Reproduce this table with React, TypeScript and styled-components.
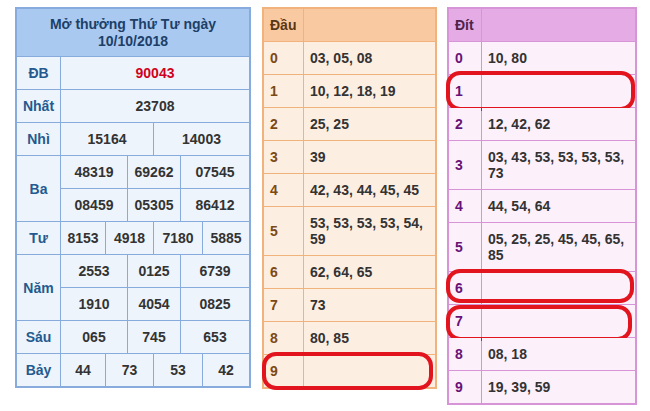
import styled, { createGlobalStyle } from 'styled-components';

const GlobalStyle = createGlobalStyle`
  body {
    margin: 0;
    background: #fff;
    font-family: 'Liberation Sans', Arial, sans-serif;
  }
  * {
    box-sizing: border-box;
  }
`;

type Palette = {
  border: string;
  head: string;
  body: string;
  label: string;
  headText: string;
};

const orange: Palette = {
  border: '#f2b27c',
  head: '#f9caa2',
  body: '#fdeee2',
  label: '#7b4a14',
  headText: '#5a3714',
};

const violet: Palette = {
  border: '#d795d8',
  head: '#e4abe5',
  body: '#fcf0fb',
  label: '#6a1176',
  headText: '#4f2448',
};

const Page = styled.div`
  display: flex;
  align-items: flex-start;
  gap: 10px;
  padding: 7px 0 0 15px;
`;

const ResultBoard = styled.div`
  display: grid;
  grid-template-columns: 43px 44px 21px 25px 26px 21px 46px;
  grid-template-rows: 47px;
  grid-auto-rows: 32px;
  gap: 1px;
  width: 236px;
  margin-right: 1px;
  background: #86abdc;
  border: 2px solid #86abdc;
  font-size: 14px;
  font-weight: bold;
`;

const BoardTitle = styled.div`
  grid-column: span 7;
  display: flex;
  align-items: center;
  justify-content: center;
  text-align: center;
  line-height: 17px;
  background: #aac9f1;
  color: #1d3f68;
`;

const Prize = styled.div<{ $rows?: number }>`
  grid-row: span ${(p) => p.$rows ?? 1};
  display: flex;
  align-items: center;
  justify-content: center;
  background: #eef4fb;
  color: #245a8f;
`;

const Num = styled.div<{ $span: number; $hot?: boolean }>`
  grid-column: span ${(p) => p.$span};
  display: flex;
  align-items: center;
  justify-content: center;
  background: #eef4fb;
  color: ${(p) => (p.$hot ? '#d0021b' : '#333')};
`;

const LotoTable = styled.div<{ $p: Palette; $w: number }>`
  display: flex;
  flex-direction: column;
  gap: 1px;
  width: ${(p) => p.$w}px;
  background: ${(p) => p.$p.border};
  border: 2px solid ${(p) => p.$p.border};
  font-size: 14px;
  font-weight: bold;
`;

const LotoRow = styled.div<{ $label: number }>`
  position: relative;
  display: grid;
  grid-template-columns: ${(p) => p.$label}px 1fr;
  gap: 1px;
`;

const LotoCell = styled.div<{ $p: Palette; $head?: boolean; $key?: boolean }>`
  min-height: 32px;
  padding: 8px 6px;
  line-height: 16px;
  background: ${(p) => (p.$head ? p.$p.head : p.$p.body)};
  color: ${(p) => (p.$head ? p.$p.headText : p.$key ? p.$p.label : '#333')};
  display: ${(p) => (p.$key ? 'flex' : 'block')};
  align-items: center;
`;

const Mark = styled.span<{ $inset: string }>`
  position: absolute;
  inset: ${(p) => p.$inset};
  border: 4px solid #e2141d;
  border-radius: 14px;
  pointer-events: none;
`;

const dau: [string, string][] = [
  ['0', '03, 05, 08'],
  ['1', '10, 12, 18, 19'],
  ['2', '25, 25'],
  ['3', '39'],
  ['4', '42, 43, 44, 45, 45'],
  ['5', '53, 53, 53, 53, 54, 59'],
  ['6', '62, 64, 65'],
  ['7', '73'],
  ['8', '80, 85'],
  ['9', ''],
];

const dit: [string, string][] = [
  ['0', '10, 80'],
  ['1', ''],
  ['2', '12, 42, 62'],
  ['3', '03, 43, 53, 53, 53, 53, 73'],
  ['4', '44, 54, 64'],
  ['5', '05, 25, 25, 45, 45, 65, 85'],
  ['6', ''],
  ['7', ''],
  ['8', '08, 18'],
  ['9', '19, 39, 59'],
];

const dauMarks: Record<string, string> = {
  '9': '-3px 2px -3px -2px',
};

const ditMarks: Record<string, string> = {
  '1': '-4px 0px -4px -3px',
  '6': '-3px 1px 1px -3px',
  '7': '0px 3px -4px -3px',
};

type LotoProps = {
  title: string;
  rows: [string, string][];
  p: Palette;
  width: number;
  label: number;
  marks: Record<string, string>;
};

const Loto = ({ title, rows, p, width, label, marks }: LotoProps) => (
  <LotoTable $p={p} $w={width}>
    <LotoRow $label={label}>
      <LotoCell $p={p} $head>
        {title}
      </LotoCell>
      <LotoCell $p={p} $head />
    </LotoRow>
    {rows.map(([k, v]) => (
      <LotoRow $label={label} key={k}>
        <LotoCell $p={p} $key>
          {k}
        </LotoCell>
        <LotoCell $p={p}>{v}</LotoCell>
        {marks[k] && <Mark $inset={marks[k]} />}
      </LotoRow>
    ))}
  </LotoTable>
);

const App = () => (
  <>
    <GlobalStyle />
    <Page>
      <ResultBoard>
        <BoardTitle>
          Mở thưởng Thứ Tư ngày
          <br />
          10/10/2018
        </BoardTitle>

        <Prize>ĐB</Prize>
        <Num $span={6} $hot>
          90043
        </Num>

        <Prize>Nhất</Prize>
        <Num $span={6}>23708</Num>

        <Prize>Nhì</Prize>
        <Num $span={3}>15164</Num>
        <Num $span={3}>14003</Num>

        <Prize $rows={2}>Ba</Prize>
        <Num $span={2}>48319</Num>
        <Num $span={2}>69262</Num>
        <Num $span={2}>07545</Num>
        <Num $span={2}>08459</Num>
        <Num $span={2}>05305</Num>
        <Num $span={2}>86412</Num>

        <Prize>Tư</Prize>
        <Num $span={1}>8153</Num>
        <Num $span={2}>4918</Num>
        <Num $span={2}>7180</Num>
        <Num $span={1}>5885</Num>

        <Prize $rows={2}>Năm</Prize>
        <Num $span={2}>2553</Num>
        <Num $span={2}>0125</Num>
        <Num $span={2}>6739</Num>
        <Num $span={2}>1910</Num>
        <Num $span={2}>4054</Num>
        <Num $span={2}>0825</Num>

        <Prize>Sáu</Prize>
        <Num $span={2}>065</Num>
        <Num $span={2}>745</Num>
        <Num $span={2}>653</Num>

        <Prize>Bảy</Prize>
        <Num $span={1}>44</Num>
        <Num $span={2}>73</Num>
        <Num $span={2}>53</Num>
        <Num $span={1}>42</Num>
      </ResultBoard>

      <Loto title="Đầu" rows={dau} p={orange} width={175} label={39} marks={dauMarks} />
      <Loto title="Đít" rows={dit} p={violet} width={190} label={32} marks={ditMarks} />
    </Page>
  </>
);

export default App;
